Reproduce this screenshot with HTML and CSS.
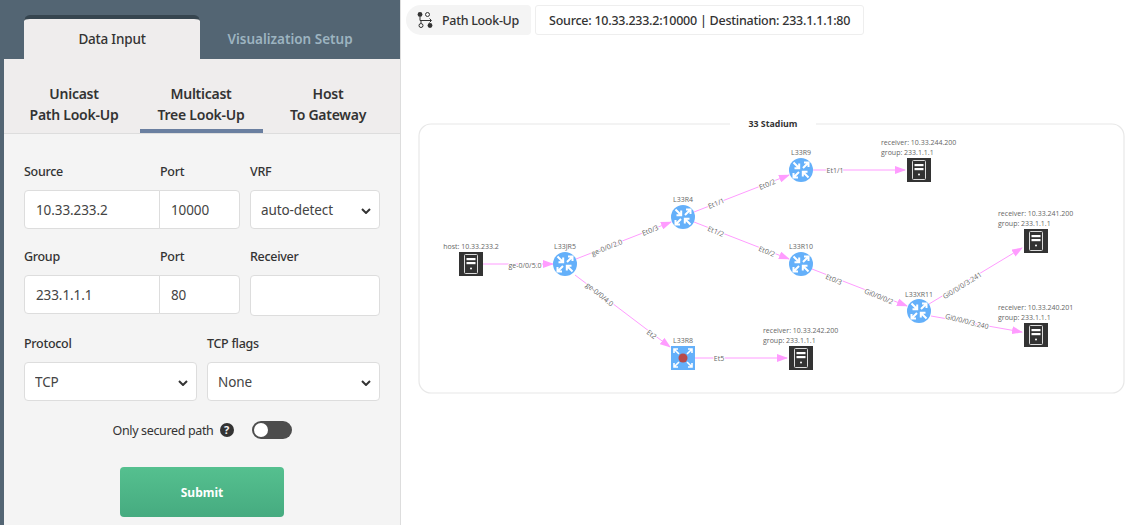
FILE: index.html
```html
<!DOCTYPE html>
<html lang="en">
<head>
    <meta charset="UTF-8">
    <title>Path Look-Up</title>
    <link rel="stylesheet" href="styles.css">
</head>
<body>
    <div class="layout">
        <aside class="sidebar">
            <div class="main-tabs">
                <div class="main-tab active">Data Input</div>
                <div class="main-tab">Visualization Setup</div>
            </div>
            <div class="panel">
                <div class="sub-tabs">
                    <div class="sub-tab">Unicast<br>Path Look-Up</div>
                    <div class="sub-tab active">Multicast<br>Tree Look-Up</div>
                    <div class="sub-tab">Host<br>To Gateway</div>
                </div>
                <form class="form">
                    <div class="row row-address">
                        <div class="field">
                            <label>Source</label>
                            <input type="text" class="input input-join" value="10.33.233.2">
                        </div>
                        <div class="field field-port">
                            <label>Port</label>
                            <input type="text" class="input" value="10000">
                        </div>
                        <div class="field field-last">
                            <label>VRF</label>
                            <div class="select-wrap">
                                <select class="input select"><option>auto-detect</option></select>
                                <svg class="chevron" viewBox="0 0 10 6"><path d="M1 1l4 4 4-4" fill="none" stroke="#333" stroke-width="2"/></svg>
                            </div>
                        </div>
                    </div>
                    <div class="row row-address">
                        <div class="field">
                            <label>Group</label>
                            <input type="text" class="input input-join" value="233.1.1.1">
                        </div>
                        <div class="field field-port">
                            <label>Port</label>
                            <input type="text" class="input" value="80">
                        </div>
                        <div class="field field-last">
                            <label>Receiver</label>
                            <input type="text" class="input input-tall">
                        </div>
                    </div>
                    <div class="row row-protocol">
                        <div class="field">
                            <label>Protocol</label>
                            <div class="select-wrap">
                                <select class="input select"><option>TCP</option></select>
                                <svg class="chevron" viewBox="0 0 10 6"><path d="M1 1l4 4 4-4" fill="none" stroke="#333" stroke-width="2"/></svg>
                            </div>
                        </div>
                        <div class="field">
                            <label>TCP flags</label>
                            <div class="select-wrap">
                                <select class="input select"><option>None</option></select>
                                <svg class="chevron" viewBox="0 0 10 6"><path d="M1 1l4 4 4-4" fill="none" stroke="#333" stroke-width="2"/></svg>
                            </div>
                        </div>
                    </div>
                    <div class="secured">
                        <span>Only secured path</span>
                        <span class="help">?</span>
                        <span class="toggle"><span class="knob"></span></span>
                    </div>
                    <button type="button" class="submit">Submit</button>
                </form>
            </div>
        </aside>

        <main class="content">
            <div class="toolbar">
                <div class="crumb">
                    <svg class="crumb-icon" viewBox="0 0 16 16">
                        <circle cx="3" cy="2.5" r="2.4" fill="#333"/>
                        <circle cx="10.5" cy="2.5" r="2" fill="none" stroke="#333"/>
                        <circle cx="4" cy="13.5" r="2" fill="none" stroke="#333"/>
                        <circle cx="13" cy="13.5" r="2.4" fill="#333"/>
                        <path d="M3 5v3.5h11M4 11V8.5M12.5 6.5l2 2-2 2" fill="none" stroke="#333"/>
                    </svg>
                    <span>Path Look-Up</span>
                </div>
                <div class="summary">Source: 10.33.233.2:10000 | Destination: 233.1.1.1:80</div>
            </div>
            <svg class="graph" viewBox="1 0 724 525" width="724" height="525">
                <defs>
                    <symbol id="router" viewBox="0 0 24 24">
                        <circle cx="12" cy="12" r="12" fill="#64b0fa"/>
                        <g fill="none" stroke="#fff" stroke-width="2">
                            <path d="M4.5 4.5l5 5M10.2 5.5v4.7H5.5"/>
                            <path d="M19.5 19.5l-5-5M13.8 18.5v-4.7h4.7"/>
                            <path d="M10 14l-5.5 5.5M4.5 15v4.5H9"/>
                            <path d="M14 10l5.5-5.5M19.5 9V4.5H15"/>
                        </g>
                    </symbol>
                    <symbol id="server" viewBox="0 0 24 24">
                        <rect width="24" height="24" fill="#333"/>
                        <rect x="5.5" y="2.5" width="13" height="19" rx="1" fill="none" stroke="#ddd"/>
                        <rect x="7.5" y="6" width="9" height="2.2" fill="#fff"/>
                        <rect x="7.5" y="10" width="9" height="2.2" fill="#fff"/>
                        <circle cx="12" cy="16.5" r="1" fill="#fff"/>
                    </symbol>
                    <symbol id="multicast" viewBox="0 0 24 24">
                        <rect width="24" height="24" fill="#64b0fa"/>
                        <g fill="none" stroke="#fff" stroke-width="1.6">
                            <path d="M3 3l5 5M3 7V3h4"/>
                            <path d="M21 3l-5 5M21 7V3h-4"/>
                            <path d="M3 21l5-5M3 17v4h4"/>
                            <path d="M21 21l-5-5M21 17v4h-4"/>
                        </g>
                        <circle cx="12" cy="12" r="4.5" fill="#b84a4a"/>
                    </symbol>
                    <marker id="arrow" markerWidth="11" markerHeight="8" refX="10" refY="4" orient="auto" markerUnits="userSpaceOnUse">
                        <path d="M0 0L11 4L0 8z" fill="#ff9cff"/>
                    </marker>
                </defs>

                <rect class="frame" x="19" y="124" width="705" height="269" rx="12"/>
                <rect x="330" y="118" width="86" height="12" fill="#fff"/>
                <text class="group-title" x="373" y="127" text-anchor="middle">33 Stadium</text>

                <g class="edges">
                    <path d="M83 264H153" marker-end="url(#arrow)"/>
                    <path d="M176 259L271 222" marker-end="url(#arrow)"/>
                    <path d="M294 212L389 175" marker-end="url(#arrow)"/>
                    <path d="M294 222L389 259" marker-end="url(#arrow)"/>
                    <path d="M175 275L270 347" marker-end="url(#arrow)"/>
                    <path d="M413 170H505" marker-end="url(#arrow)"/>
                    <path d="M412 269L507 306" marker-end="url(#arrow)"/>
                    <path d="M295 358H387" marker-end="url(#arrow)"/>
                    <path d="M529 304L622 248" marker-end="url(#arrow)"/>
                    <path d="M531 316L622 332" marker-end="url(#arrow)"/>
                </g>

                <g class="port-labels">
                    <text x="125" y="268">ge-0/0/5.0</text>
                    <text x="207" y="250" transform="rotate(-22 207 248)">ge-0/0/2.0</text>
                    <text x="250" y="233" transform="rotate(-22 250 230)">Et0/3</text>
                    <text x="316" y="206" transform="rotate(-22 316 203)">Et1/1</text>
                    <text x="367" y="187" transform="rotate(-22 367 184)">Et0/2</text>
                    <text x="316" y="234" transform="rotate(22 316 231)">Et1/2</text>
                    <text x="367" y="254" transform="rotate(22 367 251)">Et0/2</text>
                    <text x="200" y="297" transform="rotate(39 200 294)">ge-0/0/4.0</text>
                    <text x="252" y="337" transform="rotate(38 252 334)">Et2</text>
                    <text x="319" y="361">Et5</text>
                    <text x="435" y="173">Et1/1</text>
                    <text x="434" y="282" transform="rotate(22 434 279)">Et0/3</text>
                    <text x="479" y="299" transform="rotate(22 479 296)">Gi0/0/0/2</text>
                    <text x="562" y="288" transform="rotate(-32 562 285)">Gi0/0/0/3.241</text>
                    <text x="567" y="324" transform="rotate(14 567 321)">Gi0/0/0/3.240</text>
                </g>

                <use href="#server" x="59" y="252" width="24" height="24"/>
                <use href="#router" x="153" y="252" width="24" height="24"/>
                <use href="#router" x="271" y="205" width="24" height="24"/>
                <use href="#router" x="389" y="158" width="24" height="24"/>
                <use href="#router" x="389" y="252" width="24" height="24"/>
                <use href="#multicast" x="271" y="346" width="24" height="24"/>
                <use href="#router" x="507" y="299" width="24" height="24"/>
                <use href="#server" x="507" y="158" width="24" height="24"/>
                <use href="#server" x="624" y="229" width="24" height="24"/>
                <use href="#server" x="624" y="323" width="24" height="24"/>
                <use href="#server" x="389" y="346" width="24" height="24"/>

                <g class="node-labels">
                    <text x="71" y="249" text-anchor="middle">host: 10.33.233.2</text>
                    <text x="165" y="249" text-anchor="middle">L33JR5</text>
                    <text x="283" y="202" text-anchor="middle">L33R4</text>
                    <text x="401" y="155" text-anchor="middle">L33R9</text>
                    <text x="401" y="249" text-anchor="middle">L33R10</text>
                    <text x="283" y="343" text-anchor="middle">L33R8</text>
                    <text x="519" y="297" text-anchor="middle">L33XR11</text>
                    <text x="481" y="145">receiver: 10.33.244.200</text>
                    <text x="481" y="155">group: 233.1.1.1</text>
                    <text x="598" y="216">receiver: 10.33.241.200</text>
                    <text x="598" y="226">group: 233.1.1.1</text>
                    <text x="598" y="310">receiver: 10.33.240.201</text>
                    <text x="598" y="320">group: 233.1.1.1</text>
                    <text x="363" y="333">receiver: 10.33.242.200</text>
                    <text x="363" y="343">group: 233.1.1.1</text>
                </g>
            </svg>
        </main>
    </div>
</body>
</html>
```

FILE: styles.css
```css
* {
    box-sizing: border-box;
}
html, body {
    margin: 0;
    height: 100%;
    overflow: hidden;
}
body {
    font-family: "Noto Sans", "Liberation Sans", sans-serif;
    background-color: #fff;
    color: #333;
}
.layout {
    display: flex;
    height: 525px;
}
.sidebar {
    width: 401px;
    flex-shrink: 0;
    display: flex;
    flex-direction: column;
    padding-top: 15px;
    background-color: #536573;
    border-right: 1px solid #ddd;
}
.main-tabs {
    display: flex;
    height: 44px;
    padding-left: 24px;
}
.main-tab {
    width: 180px;
    display: flex;
    align-items: center;
    justify-content: center;
    padding-top: 4px;
    font-size: 13.5px;
    font-weight: 600;
    color: #9db4c0;
}
.main-tab.active {
    width: 176px;
    background-color: #efeded;
    border-top: 4px solid #36454f;
    border-radius: 6px 6px 0 0;
    padding-top: 0;
    padding-bottom: 1px;
    color: #333;
    font-weight: 500;
    letter-spacing: -0.2px;
}
.panel {
    flex: 1;
    margin-left: 4px;
    background-color: #f4f4f4;
}
.sub-tabs {
    display: flex;
    gap: 4px;
    height: 75px;
    padding-left: 8.5px;
    background-color: #efeded;
    border-bottom: 1px solid #ddd;
}
.sub-tab {
    width: 123px;
    padding-top: 24px;
    text-align: center;
    font-size: 14px;
    line-height: 21px;
    font-weight: 600;
    letter-spacing: -0.25px;
    color: #333;
    white-space: nowrap;
}
.sub-tab.active {
    border-bottom: 4px solid #6a7fa0;
    border-radius: 4px 4px 0 0;
}
.form {
    padding: 28px 20px 0;
}
.row {
    display: grid;
    margin-bottom: 18px;
}
.row-address {
    grid-template-columns: 135px 81px 140px;
}
.field-last {
    padding-left: 10px;
}
.field-port label {
    padding-left: 1px;
}
.row-protocol {
    grid-template-columns: 173px 173px;
    column-gap: 10px;
    margin-bottom: 20px;
}
.field label {
    display: block;
    height: 19px;
    margin-bottom: 9px;
    font-size: 12.5px;
    line-height: 19px;
    font-weight: 500;
    letter-spacing: -0.3px;
    color: #333;
}
.input {
    display: block;
    width: 100%;
    height: 39px;
    padding: 0 11px;
    background-color: #fff;
    border: 1px solid #ddd;
    border-radius: 4px;
    font-family: inherit;
    font-size: 13.5px;
    letter-spacing: -0.1px;
    color: #444;
    outline: none;
}
.input-tall {
    height: 41px;
}
.input-join {
    width: calc(100% + 1px);
    border-radius: 4px 0 0 4px;
}
.field-port .input {
    border-radius: 0 4px 4px 0;
}
.select {
    appearance: none;
    -webkit-appearance: none;
    padding: 1px 24px 0 10px;
}
.select-wrap {
    position: relative;
}
.chevron {
    position: absolute;
    right: 9px;
    top: 18px;
    width: 10px;
    height: 6px;
}
.secured {
    display: flex;
    align-items: center;
    justify-content: center;
    height: 18px;
    font-size: 12.5px;
    letter-spacing: -0.35px;
    color: #333;
}
.help {
    width: 14px;
    height: 14px;
    margin-left: 6px;
    border-radius: 50%;
    background-color: #333;
    color: #f4f4f4;
    font-size: 11px;
    line-height: 14px;
    font-weight: 700;
    letter-spacing: 0;
    text-align: center;
}
.toggle {
    width: 40px;
    height: 18px;
    margin-left: 18px;
    padding: 2px;
    border-radius: 9px;
    background-color: #4d4d4d;
}
.knob {
    display: block;
    width: 14px;
    height: 14px;
    border-radius: 50%;
    background-color: #fff;
}
.submit {
    display: block;
    width: 164px;
    height: 50px;
    margin: 28px auto 0;
    border: none;
    border-radius: 4px;
    background: linear-gradient(#55c08f, #46ab80);
    color: #fff;
    font-family: inherit;
    font-size: 12px;
    font-weight: 700;
}
.content {
    flex: 1;
    position: relative;
    min-width: 0;
}
.toolbar {
    display: flex;
    align-items: stretch;
    gap: 4px;
    height: 30px;
    margin: 5px 0 0 5px;
}
.crumb {
    display: flex;
    align-items: center;
    gap: 9px;
    width: 125px;
    padding-left: 11px;
    background-color: #f4f4f4;
    border-radius: 15px 4px 4px 15px;
    font-size: 12.5px;
    font-weight: 500;
    letter-spacing: -0.3px;
    color: #333;
}
.crumb-icon {
    width: 16px;
    height: 16px;
}
.summary {
    display: flex;
    align-items: center;
    padding: 0 13px;
    background-color: #fff;
    border: 1px solid #eee;
    border-radius: 3px;
    font-size: 12.5px;
    font-weight: 500;
    letter-spacing: -0.24px;
    color: #333;
}
.graph {
    position: absolute;
    left: 0;
    top: 0;
}
.frame {
    fill: #fff;
    stroke: #e8e8e8;
    stroke-width: 1.2;
}
.group-title {
    font-family: "Open Sans", sans-serif;
    font-size: 8.8px;
    font-weight: 700;
    fill: #333;
}
.edges path {
    fill: none;
    stroke: #ff9cff;
    stroke-width: 1;
}
.port-labels text {
    font-family: "Open Sans", sans-serif;
    font-size: 7px;
    fill: #666;
    text-anchor: middle;
    paint-order: stroke;
    stroke: #fff;
    stroke-width: 2px;
}
.node-labels text {
    font-family: "Open Sans", sans-serif;
    font-size: 7px;
    fill: #666;
}
```
